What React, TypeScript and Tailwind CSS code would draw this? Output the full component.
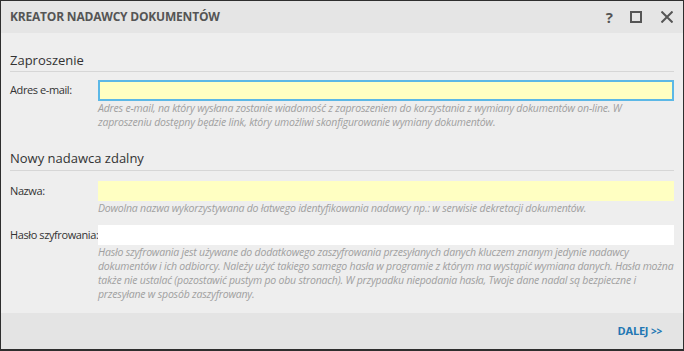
const font = { fontFamily: '"Open Sans", "Noto Sans", sans-serif' };

function HelpText({ lines }: { lines: string[] }) {
  return (
    <div className="ml-[88px] text-[10.5px] leading-[14px] italic text-[#a0a0a0] tracking-[-0.2px]">
      {lines.map((l) => (
        <div key={l} className="whitespace-nowrap">
          {l}
        </div>
      ))}
    </div>
  );
}

function Field({
  label,
  className,
}: {
  label: string;
  className: string;
}) {
  return (
    <div className="flex items-center">
      <label className="w-[88px] shrink-0 whitespace-nowrap text-[11px] text-[#333] tracking-[-0.4px]">
        {label}
      </label>
      <input className={`flex-1 min-w-0 outline-none ${className}`} />
    </div>
  );
}

export default function App() {
  return (
    <div
      style={font}
      className="w-[684px] h-[351px] flex flex-col border border-b-2 border-[#2e2e2e] bg-[#eeeeee]"
    >
      {/* Title bar */}
      <div className="h-[32px] shrink-0 flex items-center pl-[9px] pr-[10px] bg-[#e5e5e5]">
        <span className="text-[12px] font-bold text-[#555] tracking-[-0.2px]">
          KREATOR NADAWCY DOKUMENTÓW
        </span>
        <div className="ml-auto flex items-center">
          <span className="text-[15px] font-bold text-[#555] leading-none">?</span>
          <span className="ml-[17px] w-[12px] h-[12px] border-2 border-[#555]" />
          <svg className="ml-[19px]" width="12" height="12" viewBox="0 0 12 12">
            <path d="M0.5 0.5 L11.5 11.5 M11.5 0.5 L0.5 11.5" stroke="#555" strokeWidth="2" />
          </svg>
        </div>
      </div>

      {/* Body */}
      <div className="flex-1 px-[9px]">
        <div className="mt-[18px] pb-[2px] text-[13px] leading-[18px] text-[#333] border-b border-[#d6d6d6]">
          Zaproszenie
        </div>
        <div className="mt-[8px]">
          <Field
            label="Adres e-mail:"
            className="h-[21px] bg-[#ffffc2] border-2 border-[#5cb8e6]"
          />
        </div>
        <HelpText
          lines={[
            "Adres e-mail, na który wysłana zostanie wiadomość z zaproszeniem do korzystania z wymiany dokumentów on-line. W",
            "zaproszeniu dostępny będzie link, który umożliwi skonfigurowanie wymiany dokumentów.",
          ]}
        />

        <div className="mt-[20px] pb-[3px] text-[13px] leading-[18px] text-[#333] border-b border-[#d6d6d6]">
          Nowy nadawca zdalny
        </div>
        <div className="mt-[10px]">
          <Field label="Nazwa:" className="h-[20px] bg-[#ffffc2]" />
        </div>
        <HelpText
          lines={[
            "Dowolna nazwa wykorzystywana do łatwego identyfikowania nadawcy np.: w serwisie dekretacji dokumentów.",
          ]}
        />
        <div className="mt-[10px]">
          <Field label="Hasło szyfrowania:" className="h-[20px] bg-white" />
        </div>
        <HelpText
          lines={[
            "Hasło szyfrowania jest używane do dodatkowego zaszyfrowania przesyłanych danych kluczem znanym jedynie nadawcy",
            "dokumentów i ich odbiorcy. Należy użyć takiego samego hasła w programie z którym ma wystąpić wymiana danych. Hasła można",
            "także nie ustalać (pozostawić pustym po obu stronach). W przypadku niepodania hasła, Twoje dane nadal są bezpieczne i",
            "przesyłane w sposób zaszyfrowany.",
          ]}
        />
      </div>

      {/* Footer */}
      <div className="h-[36px] shrink-0 flex items-center justify-end pr-[21px] bg-[#e4e4e4]">
        <span className="text-[11px] font-bold text-[#2277b3] tracking-[-0.2px]">
          DALEJ <span className="text-[10px]">&gt;&gt;</span>
        </span>
      </div>
    </div>
  );
}
